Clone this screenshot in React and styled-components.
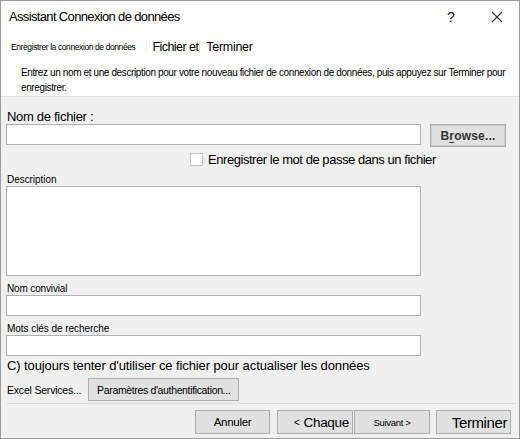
import React from 'react';
import styled, { createGlobalStyle } from 'styled-components';

const GlobalStyle = createGlobalStyle`
  html, body {
    margin: 0;
    padding: 0;
    background: #ffffff;
  }
  * {
    box-sizing: border-box;
  }
`;

const Window = styled.div`
  width: 520px;
  height: 439px;
  border: 1px solid #9c9c9c;
  display: flex;
  flex-direction: column;
  font-family: "Liberation Sans", Arial, sans-serif;
  color: #000;
  background: #f0f0f0;
  overflow: hidden;
`;

const Header = styled.div`
  background: #ffffff;
  height: 96px;
  flex: none;
  display: flex;
  flex-direction: column;
  border-bottom: 1px solid #e3e3e3;
`;

const TitleBar = styled.div`
  height: 31px;
  display: flex;
  align-items: center;
  padding-left: 8px;
`;

const Title = styled.div`
  flex: 1;
  font-size: 13px;
  letter-spacing: -0.65px;
`;

const HelpMark = styled.div`
  font-size: 14px;
  width: 10px;
  margin-right: 34px;
  color: #222;
`;

const CloseButton = styled.div`
  width: 12px;
  height: 12px;
  margin-right: 16px;
  display: flex;
`;

const Steps = styled.div`
  height: 30px;
  display: flex;
  align-items: center;
  padding-left: 10px;
`;

const Step = styled.span`
  font-size: ${(p) => p.$size}px;
  letter-spacing: ${(p) => p.$spacing || 0}px;
  margin-left: ${(p) => p.$gap || 0}px;
  white-space: nowrap;
`;

const StepMark = styled.span`
  display: inline-block;
  width: 1px;
  height: 14px;
  background: ${(p) => p.$color};
  margin-left: ${(p) => p.$gap}px;
`;

const Intro = styled.p`
  margin: 3px 0 0;
  padding: 0 2px 0 20px;
  font-size: 10px;
  line-height: 15px;
  letter-spacing: -0.38px;
`;

const Body = styled.div`
  flex: 1;
  padding: 0 5px 0 5px;
  display: flex;
  flex-direction: column;
`;

const Label = styled.div`
  font-size: ${(p) => p.$size}px;
  height: ${(p) => p.$h}px;
  line-height: ${(p) => p.$h}px;
  margin-top: ${(p) => p.$mt}px;
  letter-spacing: ${(p) => p.$spacing || 0}px;
  padding-left: 1px;
  white-space: nowrap;
`;

const Row = styled.div`
  display: flex;
  align-items: ${(p) => p.$align || 'flex-start'};
  margin-top: ${(p) => p.$mt || 0}px;
`;

const TextBox = styled.div`
  width: 415px;
  height: ${(p) => p.$h || 21}px;
  flex: none;
  background: #ffffff;
  border: 1px solid #b1b1b1;
`;

const Button = styled.div`
  width: ${(p) => p.$w}px;
  height: ${(p) => p.$h || 24}px;
  flex: none;
  background: #e1e1e1;
  border: 1px solid #adadad;
  display: flex;
  align-items: center;
  justify-content: ${(p) => p.$justify || 'center'};
  padding: 0 3px;
  font-size: ${(p) => p.$size || 12}px;
  letter-spacing: ${(p) => p.$spacing || 0}px;
  margin-left: ${(p) => p.$ml || 0}px;
  white-space: nowrap;
  overflow: visible;
`;

const BrowseButton = styled(Button)`
  border: 2px solid #cdcdcd;
  outline: 1px solid #adadad;
  outline-offset: -1px;
  font-weight: bold;
  color: #333;
  letter-spacing: 0.2px;
  u {
    text-decoration: underline;
    text-underline-offset: 2px;
  }
`;

const CheckRow = styled.div`
  display: flex;
  align-items: center;
  margin-top: 4px;
  padding-left: 184px;
  height: 16px;
`;

const CheckBox = styled.span`
  width: 13px;
  height: 13px;
  background: #ffffff;
  border: 1px solid #c4c4c4;
  margin-right: 5px;
`;

const CheckLabel = styled.span`
  font-size: 13px;
  letter-spacing: -0.45px;
  white-space: nowrap;
`;

const Separator = styled.div`
  height: 1px;
  flex: none;
  background: #dcdcdc;
  margin: 2px 0 0 1px;
  width: 508px;
`;

const Footer = styled.div`
  display: flex;
  justify-content: flex-end;
  margin-top: 6px;
  padding-right: 3px;
`;

const Chevron = styled.span`
  font-size: 10px;
  margin-right: 4px;
`;

const CloseIcon = () => (
  <svg width="12" height="12" viewBox="0 0 12 12">
    <path d="M1 1 L11 11 M11 1 L1 11" stroke="#333" strokeWidth="1.1" fill="none" />
  </svg>
);

export default function App() {
  return (
    <>
      <GlobalStyle />
      <Window>
        <Header>
          <TitleBar>
            <Title>Assistant Connexion de données</Title>
            <HelpMark>?</HelpMark>
            <CloseButton>
              <CloseIcon />
            </CloseButton>
          </TitleBar>
          <Steps>
            <Step $size={8.5} $spacing={-0.4}>Enregistrer la connexion de données</Step>
            <StepMark $color="#e6eef8" $gap={11} />
            <Step $size={12.5} $spacing={-0.55} $gap={5}>Fichier et</Step>
            <StepMark $color="#e9e2cf" $gap={1} />
            <Step $size={12.5} $spacing={-0.3} $gap={6}>Terminer</Step>
          </Steps>
          <Intro>
            Entrez un nom et une description pour votre nouveau fichier de connexion de données, puis appuyez sur Terminer pour enregistrer.
          </Intro>
        </Header>
        <Body>
          <Label $size={13} $h={14} $mt={13} $spacing={-0.3}>Nom de fichier :</Label>
          <Row>
            <TextBox />
            <BrowseButton $w={76} $h={23} $ml={9}>
              B<u>r</u>owse...
            </BrowseButton>
          </Row>
          <CheckRow>
            <CheckBox />
            <CheckLabel>Enregistrer le mot de passe dans un fichier</CheckLabel>
          </CheckRow>
          <Label $size={10} $h={13} $mt={6} $spacing={-0.05}>Description</Label>
          <TextBox $h={90} />
          <Label $size={10} $h={13} $mt={6} $spacing={-0.15}>Nom convivial</Label>
          <TextBox />
          <Label $size={10} $h={13} $mt={6} $spacing={-0.05}>Mots clés de recherche</Label>
          <TextBox />
          <Label $size={13} $h={14} $mt={3} $spacing={-0.1}>C) toujours tenter d'utiliser ce fichier pour actualiser les données</Label>
          <Row $align="center" $mt={5}>
            <Label $size={10.5} $h={14} $mt={0} $spacing={-0.2}>Excel Services...</Label>
            <Button $w={151} $h={23} $ml={7} $size={10.5} $spacing={-0.35}>
              Paramètres d'authentification...
            </Button>
          </Row>
          <Separator />
          <Footer>
            <Button $w={75} $size={11.5} $spacing={-0.3}>Annuler</Button>
            <Button $w={76} $ml={7} $size={13.5} $justify="flex-end" $spacing={-0.3}>
              <Chevron>&lt;</Chevron>Chaque
            </Button>
            <Button $w={76} $ml={1} $size={9.5} $spacing={-0.3}>Suivant &gt;</Button>
            <Button $w={75} $ml={6} $size={15} $justify="flex-end" $spacing={-0.4}>Terminer</Button>
          </Footer>
        </Body>
      </Window>
    </>
  );
}
